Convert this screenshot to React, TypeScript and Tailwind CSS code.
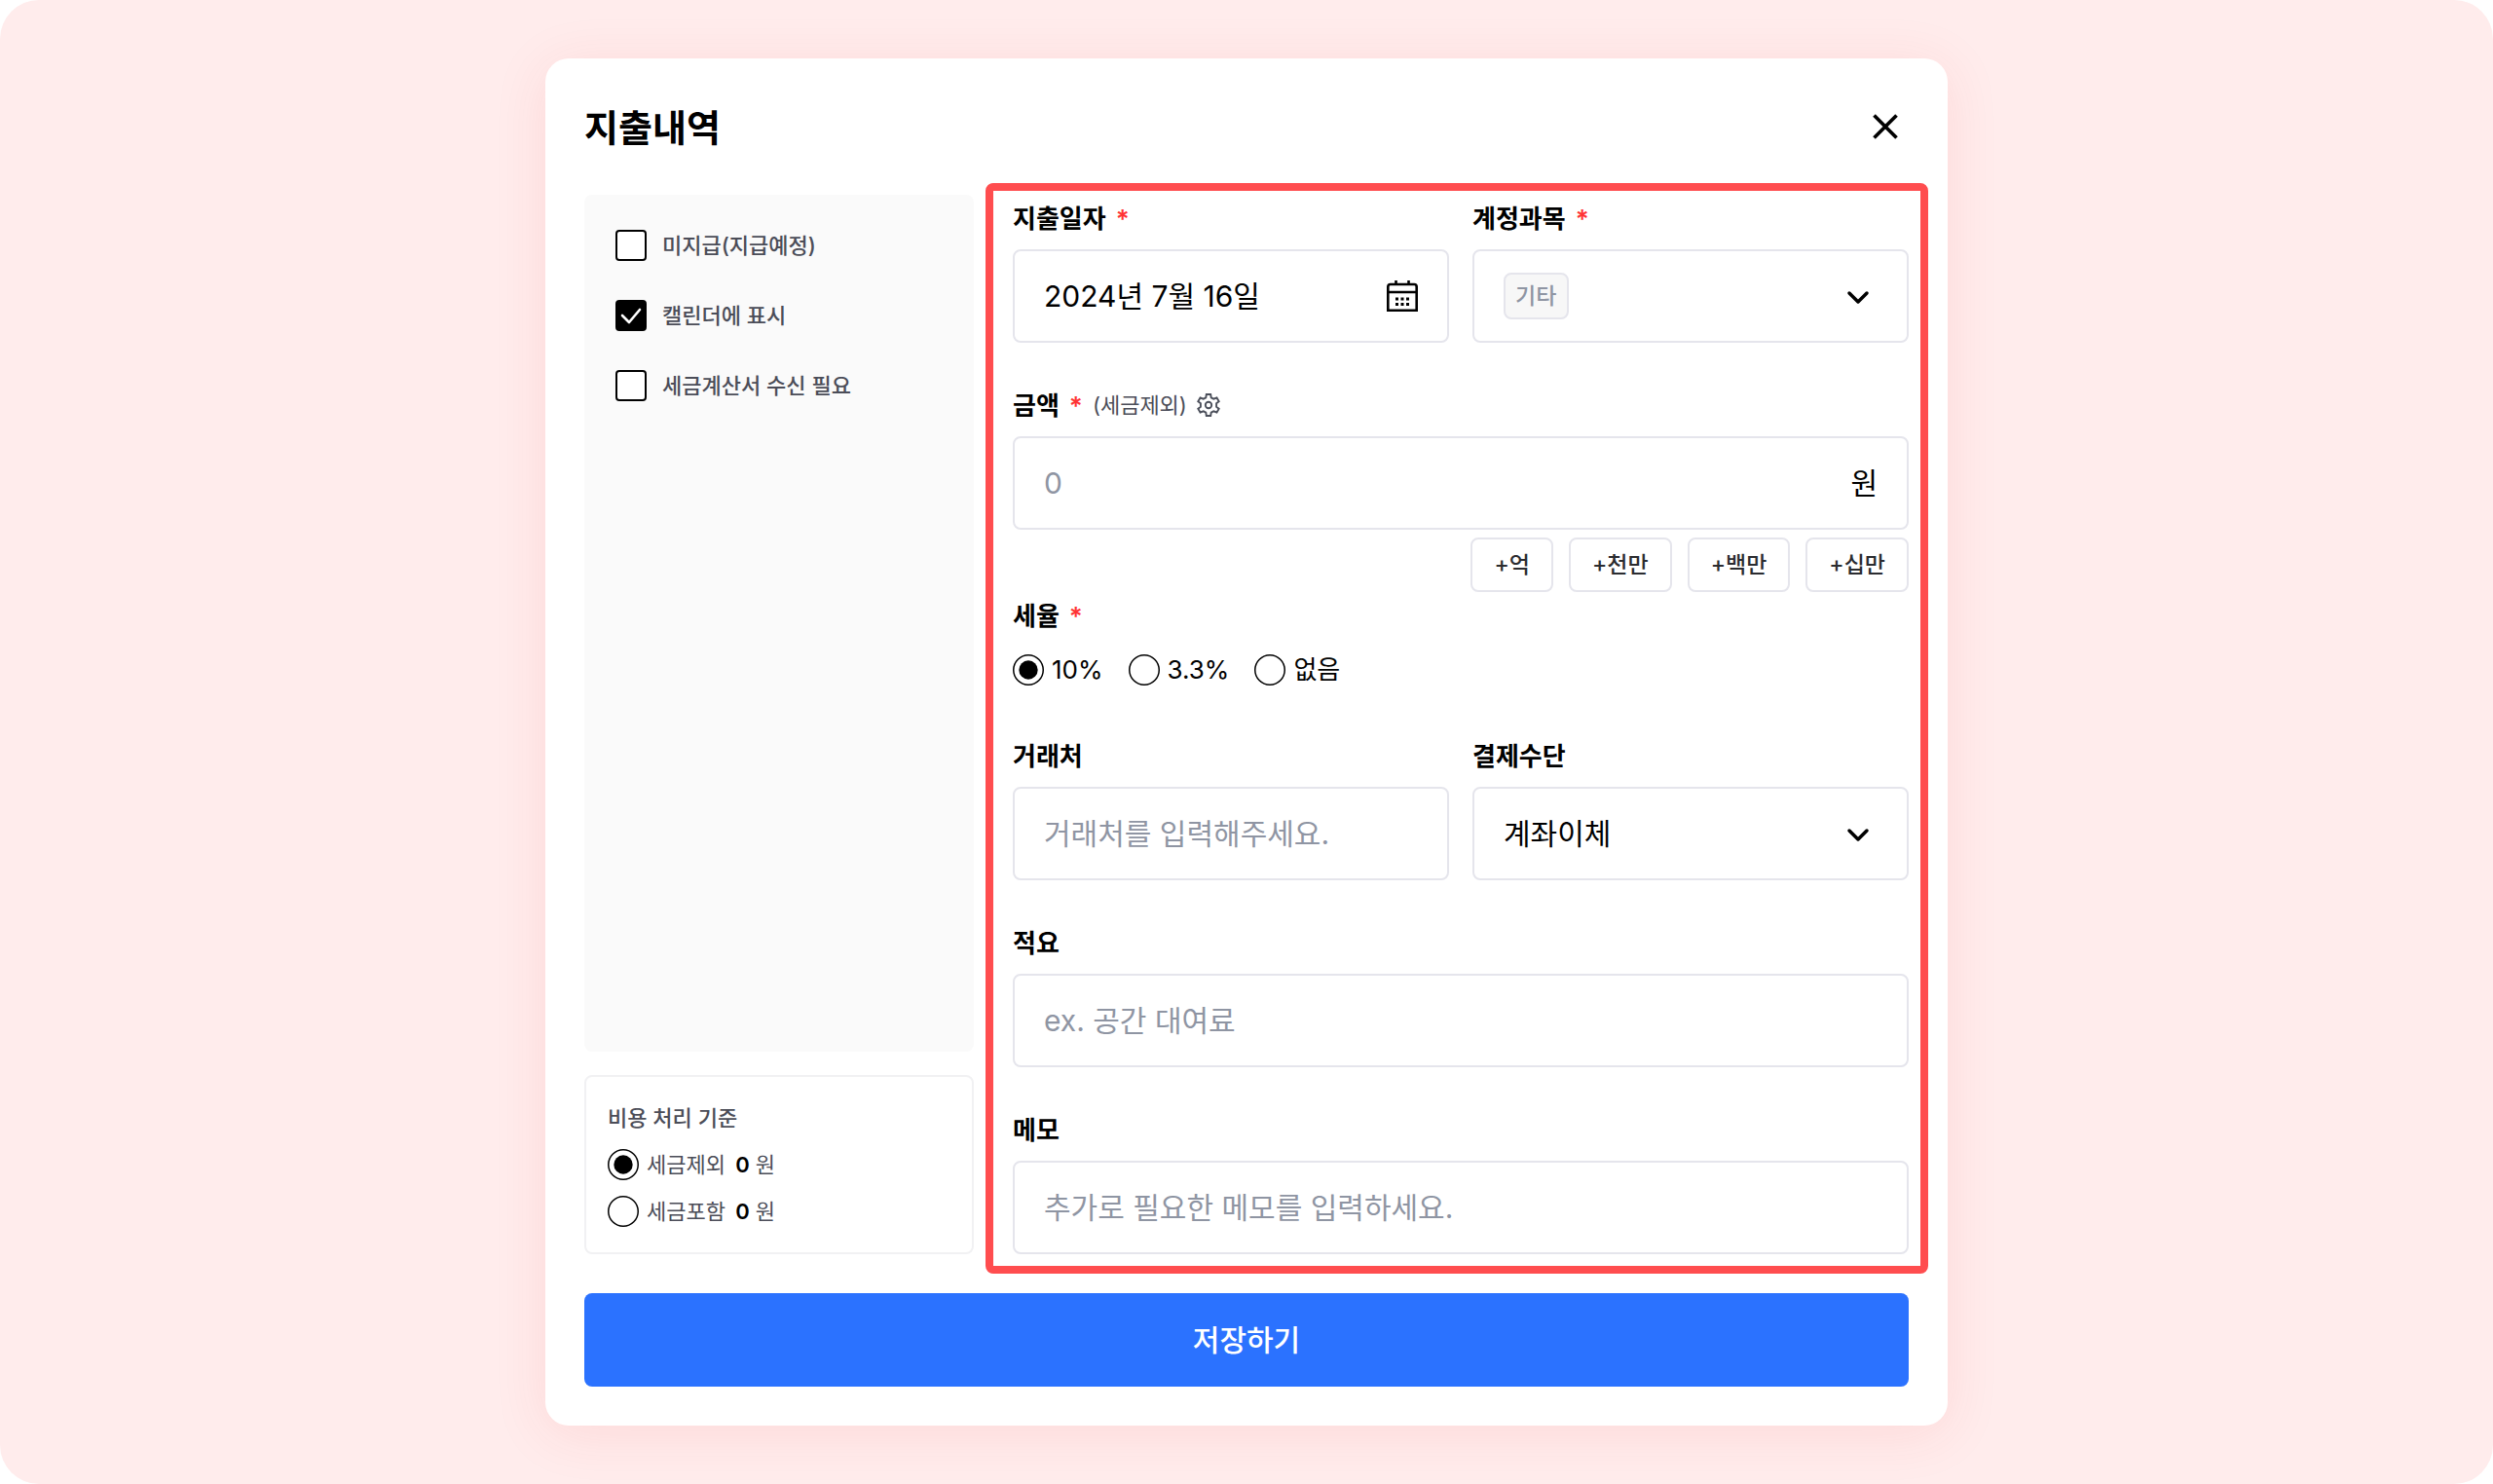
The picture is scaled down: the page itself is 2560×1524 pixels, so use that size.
import type { InputHTMLAttributes, ReactNode } from "react";

const fieldBox =
  "flex h-24 w-full items-center rounded-lg border-2 border-[#e5e5ec] bg-white px-[30px]";
const fieldInput =
  "min-w-0 flex-1 bg-transparent text-[30px] leading-10 text-black outline-none placeholder:text-[#8f95a3]";

function Label({ htmlFor, required, children }: { htmlFor?: string; required?: boolean; children: ReactNode }) {
  return (
    <div className="flex h-12 items-center gap-[10px] pt-0.5">
      <label htmlFor={htmlFor} className="text-[26px] font-semibold leading-10">
        {children}
      </label>
      {required && <span className="text-[26px] font-semibold leading-10 text-[#ff3333]">*</span>}
    </div>
  );
}

function Chevron() {
  return (
    <svg viewBox="0 0 40 40" className="pointer-events-none size-10 shrink-0" fill="none" aria-hidden="true">
      <path d="M11 17l9 9 9-9" stroke="#000" strokeWidth="3.5" strokeLinecap="round" strokeLinejoin="round" />
    </svg>
  );
}

function CalendarIcon() {
  return (
    <svg viewBox="0 0 32 32" className="size-8" fill="none" aria-hidden="true">
      <path d="M1.3 30.7V6.500a2.500 2.500 0 0 1 2.500-2.500h24.400a2.500 2.500 0 0 1 2.500 2.500v24.200zM1.3 12h29.400" stroke="#000" strokeWidth="2.600" />
      <path d="M9.500 0v4M22.500 0v4" stroke="#000" strokeWidth="2.600" />
      <path
        d="M9 17.500h3v3H9zM14.500 17.500h3v3h-3zM20 17.500h3v3h-3zM9 23h3v3H9zM14.500 23h3v3h-3zM20 23h3v3h-3z"
        fill="#000"
      />
    </svg>
  );
}

function GearIcon() {
  return (
    <svg viewBox="0 0 24 24" className="size-6" fill="none" stroke="#4b4f5a" strokeWidth="1.900" aria-hidden="true">
      <path d="M9.800 1h4.400l.5 3.300 2.500 1.400 3.300-1.200 2.200 3.700-2.600 2.100v3.400l2.600 2.100-2.200 3.700-3.300-1.200-2.500 1.400-.5 3.300H9.800l-.5-3.300-2.500-1.400-3.300 1.200-2.200-3.700 2.600-2.100v-3.400L1.300 8.200l2.200-3.700 3.300 1.200 2.500-1.400z" />
      <circle cx="12" cy="12" r="3.200" />
    </svg>
  );
}

function Checkbox({ children, defaultChecked }: { children: ReactNode; defaultChecked?: boolean }) {
  return (
    <label className="flex h-10 items-center gap-4 text-[22px] font-medium leading-8 text-[#4b4d58]">
      <span className="grid size-8 shrink-0 place-items-center">
        <input
          type="checkbox"
          defaultChecked={defaultChecked}
          className="peer col-start-1 row-start-1 size-8 appearance-none rounded-sm border-2 border-black bg-white checked:bg-black"
        />
        <svg
          viewBox="0 0 32 32"
          className="pointer-events-none invisible col-start-1 row-start-1 size-8 peer-checked:visible"
          fill="none"
          aria-hidden="true"
        >
          <path d="M7 16l7 7L25 10" stroke="#fff" strokeWidth="2.600" strokeLinecap="round" strokeLinejoin="round" />
        </svg>
      </span>
      {children}
    </label>
  );
}

function Radio(props: InputHTMLAttributes<HTMLInputElement>) {
  return (
    <span className="grid size-8 shrink-0">
      <input
        type="radio"
        className="peer col-start-1 row-start-1 size-8 appearance-none rounded-full bg-white"
        {...props}
      />
      <svg
        viewBox="0 0 32 32"
        className="pointer-events-none col-start-1 row-start-1 size-8 text-transparent peer-checked:text-black"
        aria-hidden="true"
      >
        <circle cx="16" cy="16" r="15.250" fill="none" stroke="#000" strokeWidth="1.500" />
        <circle cx="16" cy="16" r="9.700" fill="currentColor" />
      </svg>
    </span>
  );
}

const taxBases = ["세금제외", "세금포함"];
const taxRates = ["10%", "3.3%", "없음"];
const quickAmounts = ["+억", "+천만", "+백만", "+십만"];

export default function App() {
  return (
    <div className="min-h-screen rounded-[40px] bg-[#ffecec] px-6 py-[60px] font-['Inter','Noto_Sans_CJK_KR',sans-serif] text-black">
      <main className="mx-auto w-full max-w-[1440px] rounded-3xl bg-white p-10 shadow-[0_8px_56px_rgba(240,50,50,0.1)]">
        <header className="mb-10 flex h-15 items-center justify-between">
          <h1 className="pt-0.5 text-[38px] font-semibold leading-[60px]">지출내역</h1>
          <button type="button" aria-label="닫기" className="size-12">
            <svg viewBox="0 0 48 48" className="size-12" fill="none" aria-hidden="true">
              <path d="M12.500 12.500l23 23M35.500 12.500l-23 23" stroke="#000" strokeWidth="3.700" />
            </svg>
          </button>
        </header>

        <form>
          <div className="grid grid-cols-[400px_minmax(0,1fr)] gap-3">
            {/* Options */}
            <aside className="flex flex-col gap-6">
              <div className="flex flex-1 flex-col gap-8 rounded-lg bg-[#fafafa] p-8">
                <Checkbox>미지급(지급예정)</Checkbox>
                <Checkbox defaultChecked>캘린더에 표시</Checkbox>
                <Checkbox>세금계산서 수신 필요</Checkbox>
              </div>
              <fieldset className="rounded-lg border-2 border-[#f1f1f3] px-[22px] py-[18px] text-[22px] leading-8 text-[#4b4d58]">
                <div className="flex h-12 items-center font-medium">비용 처리 기준</div>
                {taxBases.map((name, i) => (
                  <label key={name} className="flex h-12 items-center gap-2">
                    <Radio name="basis" defaultChecked={i === 0} />
                    <span>
                      {name} <b className="ml-1 font-semibold text-black">0</b> 원
                    </span>
                  </label>
                ))}
              </fieldset>
            </aside>

            {/* Highlighted form */}
            <section className="-mb-5 -mr-5 -mt-3 flex flex-col gap-10 rounded-lg border-8 border-[#ff4d4f] pb-3 pl-5 pr-3 pt-1">
              <div className="grid grid-cols-2 gap-6">
                <div className="space-y-2">
                  <Label htmlFor="date" required>지출일자</Label>
                  <div className={fieldBox}>
                    <input id="date" defaultValue="2024년 7월 16일" className={fieldInput} />
                    <button type="button" aria-label="날짜 선택">
                      <CalendarIcon />
                    </button>
                  </div>
                </div>
                <div className="space-y-2">
                  <Label htmlFor="account" required>계정과목</Label>
                  <div className={`${fieldBox} justify-between`}>
                    <select
                      id="account"
                      className="h-12 appearance-none rounded-lg border-2 border-[#e5e5ec] bg-[#f7f7f7] px-[10px] text-[23px] font-medium leading-8 text-[#8f95a3]"
                    >
                      <option>기타</option>
                    </select>
                    <Chevron />
                  </div>
                </div>
              </div>

              <div>
                <div className="space-y-2">
                  <div className="flex items-center gap-[10px]">
                    <Label htmlFor="amount" required>금액</Label>
                    <span className="text-[22px] leading-8 text-[#4b4d58]">(세금제외)</span>
                    <button type="button" aria-label="세금 설정">
                      <GearIcon />
                    </button>
                  </div>
                  <div className={fieldBox}>
                    <input id="amount" placeholder="0" className={fieldInput} />
                    <span className="text-[30px] leading-10">원</span>
                  </div>
                </div>
                <div className="mt-2 flex justify-end gap-4">
                  {quickAmounts.map((amount) => (
                    <button
                      key={amount}
                      type="button"
                      className="h-14 rounded-lg border-2 border-[#e5e5ec] px-[22px] text-[23px] font-medium leading-8 text-[#2b2c30]"
                    >
                      {amount}
                    </button>
                  ))}
                </div>
                <div className="space-y-2">
                  <Label required>세율</Label>
                  <div className="flex h-12 items-center gap-[26px]">
                    {taxRates.map((rate, i) => (
                      <label key={rate} className="flex items-center gap-2 text-[26px] leading-10">
                        <Radio name="rate" defaultChecked={i === 0} />
                        {rate}
                      </label>
                    ))}
                  </div>
                </div>
              </div>

              <div className="grid grid-cols-2 gap-6">
                <div className="space-y-2">
                  <Label htmlFor="client">거래처</Label>
                  <div className={fieldBox}>
                    <input id="client" placeholder="거래처를 입력해주세요." className={fieldInput} />
                  </div>
                </div>
                <div className="space-y-2">
                  <Label htmlFor="payment">결제수단</Label>
                  <div className={fieldBox}>
                    <select id="payment" className={`${fieldInput} appearance-none`}>
                      <option>계좌이체</option>
                    </select>
                    <Chevron />
                  </div>
                </div>
              </div>

              <div className="space-y-2">
                <Label htmlFor="summary">적요</Label>
                <div className={fieldBox}>
                  <input id="summary" placeholder="ex. 공간 대여료" className={fieldInput} />
                </div>
              </div>

              <div className="space-y-2">
                <Label htmlFor="memo">메모</Label>
                <div className={fieldBox}>
                  <input id="memo" placeholder="추가로 필요한 메모를 입력하세요." className={fieldInput} />
                </div>
              </div>
            </section>
          </div>

          <button
            type="submit"
            className="mt-10 h-24 w-full rounded-lg bg-[#2b72ff] text-[30px] font-medium leading-10 text-white"
          >
            저장하기
          </button>
        </form>
      </main>
    </div>
  );
}
